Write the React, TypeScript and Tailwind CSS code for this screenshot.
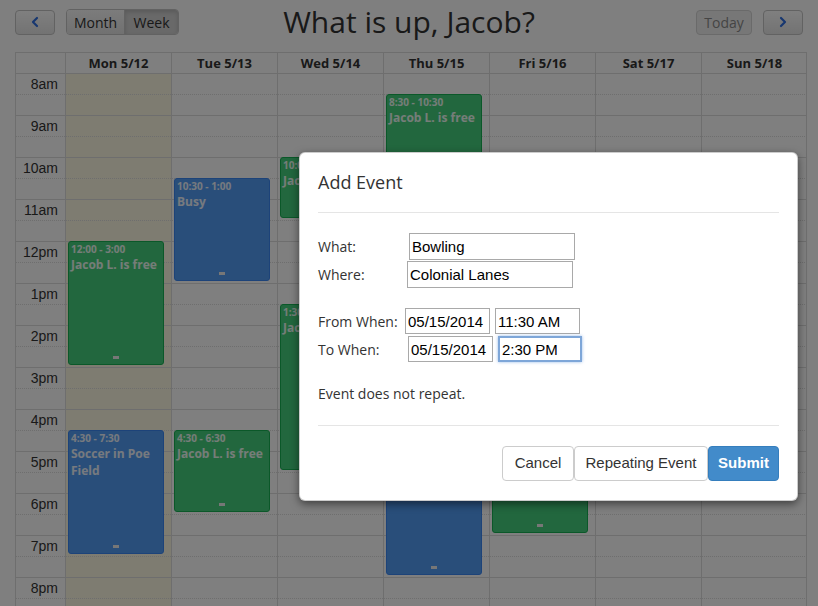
const HOURS = ["8am", "9am", "10am", "11am", "12pm", "1pm", "2pm", "3pm", "4pm", "5pm", "6pm", "7pm", "8pm"];

const DAYS = ["Mon 5/12", "Tue 5/13", "Wed 5/14", "Thu 5/15", "Fri 5/16", "Sat 5/17", "Sun 5/18"];

type CalEvent = {
  day: number;
  start: number; // hours from 8am
  end: number;
  time: string;
  title: string;
  color: "green" | "blue";
};

const EVENTS: CalEvent[] = [
  { day: 0, start: 4, end: 7, time: "12:00 - 3:00", title: "Jacob L. is free", color: "green" },
  { day: 0, start: 8.5, end: 11.5, time: "4:30 - 7:30", title: "Soccer in Poe Field", color: "blue" },
  { day: 1, start: 2.5, end: 5, time: "10:30 - 1:00", title: "Busy", color: "blue" },
  { day: 1, start: 8.5, end: 10.5, time: "4:30 - 6:30", title: "Jacob L. is free", color: "green" },
  { day: 2, start: 2, end: 3.5, time: "10:00 - 11:30", title: "Jacob L. is free", color: "green" },
  { day: 2, start: 5.5, end: 9.5, time: "1:30 - 5:30", title: "Jacob L. is free", color: "green" },
  { day: 3, start: 0.5, end: 2.5, time: "8:30 - 10:30", title: "Jacob L. is free", color: "green" },
  { day: 3, start: 8, end: 12, time: "4:00 - 8:00", title: "Busy", color: "blue" },
  { day: 4, start: 7, end: 11, time: "3:00 - 7:00", title: "Jacob L. is free", color: "green" },
];

const HOUR_PX = 42;

function Chevron({ dir }: { dir: "left" | "right" }) {
  return (
    <svg width="10" height="12" viewBox="0 0 10 12" fill="none">
      <path
        d={dir === "left" ? "M7 2 L3 6 L7 10" : "M3 2 L7 6 L3 10"}
        stroke="#2f6fe0"
        strokeWidth="2.2"
        strokeLinecap="round"
        strokeLinejoin="round"
      />
    </svg>
  );
}

function EventBox({ ev }: { ev: CalEvent }) {
  const top = ev.start * HOUR_PX - 1;
  const height = (ev.end - ev.start) * HOUR_PX - 2;
  const colors =
    ev.color === "green"
      ? "bg-[#45cf7d] border-[#17b052]"
      : "bg-[#539df4] border-[#3a86f2]";
  return (
    <div
      className={`absolute left-[2px] w-[96px] rounded-[3px] border ${colors} text-white/90 overflow-hidden`}
      style={{ top, height }}
    >
      <div className="px-[2px] pt-[1px] text-[10px] font-bold leading-[13px]">{ev.time}</div>
      <div className="px-[2px] text-[12px] font-bold leading-[17px]">{ev.title}</div>
      <div className="absolute bottom-[5px] left-1/2 -translate-x-1/2 w-[6px] h-[3px] bg-[#eeeeee]" />
    </div>
  );
}

function TimeColumn() {
  return (
    <div className="flex flex-col">
      {HOURS.map((h) => (
        <div key={h} className="h-[42px] border-b border-[#dddddd] flex flex-col">
          <div className="h-[21px] border-b border-dotted border-[#dddddd] text-right pr-[7px] text-[14px] leading-[20px] font-['Liberation_Sans',sans-serif]">
            {h}
          </div>
        </div>
      ))}
    </div>
  );
}

function DayColumn({ index }: { index: number }) {
  const isToday = index === 0;
  return (
    <div className={`relative border-l border-[#dddddd] ${isToday ? "bg-[#fcf8e3]" : ""}`}>
      {HOURS.map((h) => (
        <div key={h} className="h-[42px] border-b border-[#dddddd]">
          <div className="h-[21px] border-b border-dotted border-[#dddddd]" />
        </div>
      ))}
      {EVENTS.filter((e) => e.day === index).map((ev, i) => (
        <EventBox key={i} ev={ev} />
      ))}
    </div>
  );
}

const inputCls =
  "h-[26px] border border-[#a9a9a9] px-[2px] text-[15px] text-black font-['Liberation_Sans',sans-serif] outline-none";

function Modal() {
  return (
    <div className="absolute left-[299px] top-[152px] w-[499px] h-[349px] bg-white rounded-[6px] border border-black/20 shadow-[0_3px_9px_rgba(0,0,0,0.5)] px-[18px] text-[#333] font-['Open_Sans',sans-serif]">
      <div className="h-[60px] border-b border-[#e5e5e5] flex items-center">
        <h4 className="text-[18px] leading-[20px] pb-[2px]">Add Event</h4>
      </div>

      <div className="pt-[20px] text-[14px]">
        <div className="flex items-center h-[27px]">
          <span className="w-[91px]">What:</span>
          <input readOnly value="Bowling" className={`w-[166px] !h-[27px] ${inputCls}`} />
        </div>
        <div className="flex items-center h-[27px] mt-[1px]">
          <span className="w-[89px]">Where:</span>
          <input readOnly value="Colonial Lanes" className={`w-[166px] !h-[27px] ${inputCls}`} />
        </div>

        <div className="flex items-center h-[26px] mt-[20px]">
          <span className="w-[87px]">From When:</span>
          <input readOnly value="05/15/2014" className={`w-[85px] ${inputCls}`} />
          <input readOnly value="11:30 AM" className={`ml-[5px] w-[85px] ${inputCls}`} />
        </div>
        <div className="flex items-center h-[26px] mt-[2px]">
          <span className="w-[90px]">To When:</span>
          <input readOnly value="05/15/2014" className={`w-[85px] ${inputCls}`} />
          <input
            readOnly
            value="2:30 PM"
            className="ml-[5px] w-[84px] h-[26px] border-2 border-[#7ea6d8] px-[2px] text-[15px] text-black font-['Liberation_Sans',sans-serif] outline-none shadow-[0_0_3px_rgba(80,140,220,0.6)]"
          />
        </div>

        <p className="mt-[22px] leading-[20px]">Event does not repeat.</p>
      </div>

      <div className="mt-[21px] border-t border-[#e5e5e5] pt-[20px] flex justify-end font-['Liberation_Sans',sans-serif] text-[15px]">
        <button className="h-[35px] w-[72px] rounded-[4px] border border-[#cccccc] bg-white text-[#333]">Cancel</button>
        <button className="h-[35px] w-[134px] rounded-[4px] border border-[#cccccc] bg-white text-[#333]">Repeating Event</button>
        <button className="h-[35px] w-[71px] rounded-[4px] border border-[#357ebd] bg-[#428bca] text-white font-bold">Submit</button>
      </div>
    </div>
  );
}

export default function App() {
  return (
    <div className="relative w-[818px] h-[606px] overflow-hidden bg-white text-[#333] font-['Open_Sans',sans-serif]">
      {/* Toolbar */}
      <div className="grid grid-cols-[1fr_auto_1fr] items-center px-[15px] h-[52px] pb-[8px]">
        <div className="flex items-center gap-[11px]">
          <button className="w-[40px] h-[25px] rounded-[4px] border border-[#c4c4c4] bg-gradient-to-b from-white to-[#e6e6e6] flex items-center justify-center">
            <Chevron dir="left" />
          </button>
          <div className="flex h-[26px] rounded-[4px] border border-[#c4c4c4] overflow-hidden text-[14px]">
            <span className="w-[58px] flex items-center justify-center bg-gradient-to-b from-[#f8f8f8] to-[#e2e2e2] border-r border-[#c4c4c4]">
              Month
            </span>
            <span className="w-[53px] flex items-center justify-center bg-[#d2d2d2] shadow-[inset_0_2px_4px_rgba(0,0,0,0.15)]">
              Week
            </span>
          </div>
        </div>
        <h1 className="text-[30px] leading-[36px] text-[#333]">What is up, Jacob?</h1>
        <div className="flex items-center justify-end gap-[11px]">
          <button className="w-[56px] h-[25px] rounded-[4px] border border-[#d4d4d4] bg-[#efefef] text-[14px] text-[#8a8a8a]">
            Today
          </button>
          <button className="w-[40px] h-[25px] rounded-[4px] border border-[#c4c4c4] bg-gradient-to-b from-white to-[#e6e6e6] flex items-center justify-center">
            <Chevron dir="right" />
          </button>
        </div>
      </div>

      {/* Calendar */}
      <div className="mx-[15px] w-[792px] border border-[#dddddd]">
        <div className="grid grid-cols-[49px_repeat(7,106px)] h-[21px] border-b border-[#dddddd] text-[13px] font-bold">
          <div />
          {DAYS.map((d) => (
            <div key={d} className="border-l border-[#dddddd] text-center leading-[20px]">
              {d}
            </div>
          ))}
        </div>
        <div className="grid grid-cols-[49px_repeat(7,106px)]">
          <TimeColumn />
          {DAYS.map((d, i) => (
            <DayColumn key={d} index={i} />
          ))}
        </div>
      </div>

      {/* Backdrop */}
      <div className="absolute inset-0 bg-black/50" />

      <Modal />
    </div>
  );
}
